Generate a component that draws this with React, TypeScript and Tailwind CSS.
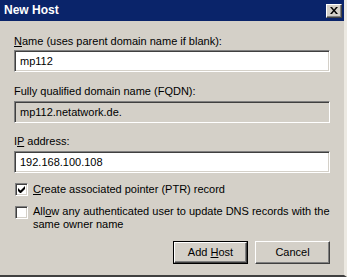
const sunken =
  'border border-t-[#808080] border-l-[#808080] border-r-white border-b-white shadow-[inset_1px_1px_0_#404040,inset_-1px_-1px_0_#d4d0c8]';
const raised =
  'border border-t-white border-l-white border-r-[#404040] border-b-[#404040] shadow-[inset_-1px_-1px_0_#808080,inset_1px_1px_0_#d4d0c8]';

function Checkbox({ checked }: { checked?: boolean }) {
  return (
    <div className={`w-[13px] h-[13px] shrink-0 bg-white flex items-center justify-center ${sunken}`}>
      {checked && (
        <svg width="7" height="7" viewBox="0 0 7 7">
          <path d="M0 2v3l2 2h1l4-4V0L2.5 4.5z" fill="#000" />
        </svg>
      )}
    </div>
  );
}

export default function App() {
  return (
    <div
      className="w-[347px] h-[277px] bg-[#d4d0c8] flex flex-col border-r-[3px] border-b-[2px] border-r-[#ece9e2] border-b-[#404040] text-[11px] leading-[13px] text-black overflow-hidden"
      style={{ fontFamily: '"Liberation Sans", Arial, sans-serif' }}
    >
      {/* Title bar */}
      <div className="h-[21px] bg-[#0a246a] flex items-center justify-between pl-[4px] pr-[2px]">
        <span className="text-white font-bold text-[12px]">New Host</span>
        <div className={`w-[16px] h-[14px] bg-[#d4d0c8] flex items-center justify-center ${raised}`}>
          <svg width="8" height="7" viewBox="0 0 8 7">
            <path d="M0 0h2l2 2.5L6 0h2L5 3.5 8 7H6L4 4.5 2 7H0l3-3.5z" fill="#000" />
          </svg>
        </div>
      </div>

      {/* Body */}
      <div className="flex flex-col px-[14px] pt-[14px]">
        <div>
          <span className="underline">N</span>ame (uses parent domain name if blank):
        </div>
        <div className={`mt-[2px] h-[22px] bg-white flex items-center pl-[5px] ${sunken}`}>mp112</div>

        <div className="mt-[13px]">Fully qualified domain name (FQDN):</div>
        <div className={`mt-[3px] h-[22px] bg-[#d4d0c8] flex items-center pl-[5px] ${sunken}`}>
          mp112.netatwork.de.
        </div>

        <div className="mt-[12px]">
          I<span className="underline">P</span> address:
        </div>
        <div className={`mt-[3px] h-[22px] bg-white flex items-center pl-[5px] ${sunken}`}>192.168.100.108</div>

        <div className="mt-[10px] flex items-center gap-[5px] pl-[1px]">
          <Checkbox checked />
          <span>
            <span className="underline">C</span>reate associated pointer (PTR) record
          </span>
        </div>

        <div className="mt-[10px] flex items-start gap-[5px] pl-[1px]">
          <Checkbox />
          <span className="-mt-[1px]">
            All<span className="underline">o</span>w any authenticated user to update DNS records with the same
            owner name
          </span>
        </div>

        <div className="mt-[10px] flex justify-end gap-[7px]">
          <div className="border border-black">
            <div className={`w-[73px] h-[21px] flex items-center justify-center ${raised}`}>
              <span>
                Add <span className="underline">H</span>ost
              </span>
            </div>
          </div>
          <div className={`w-[75px] h-[23px] flex items-center justify-center ${raised}`}>Cancel</div>
        </div>
      </div>
    </div>
  );
}
